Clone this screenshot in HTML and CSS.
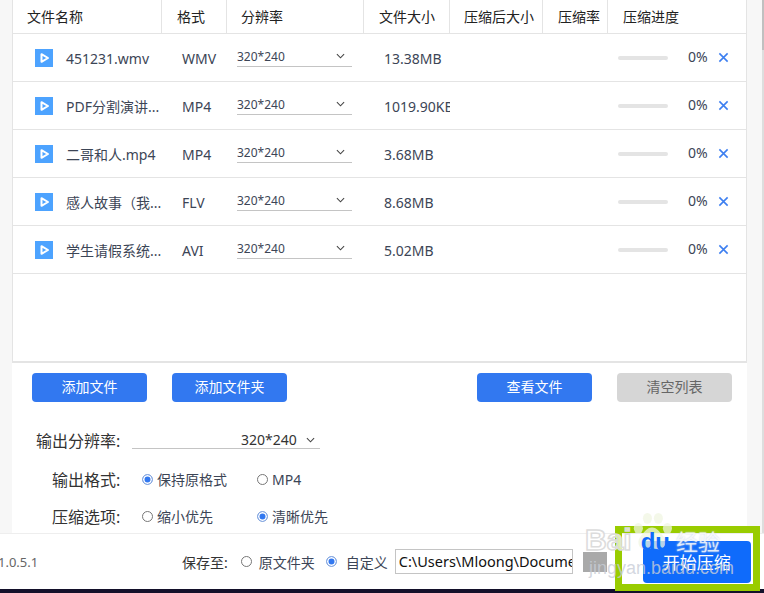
FILE: index.html
```html
<!DOCTYPE html>
<html lang="zh-CN">
<head>
  <meta charset="UTF-8">
  <meta name="viewport" content="width=device-width, initial-scale=1.0">
  <title>视频压缩</title>
  <link rel="stylesheet" href="styles.css">
</head>
<body>
  <div class="app">
    <div class="main">
      <div class="list">
        <div class="row head">
          <div class="c name">文件名称</div>
          <div class="c fmt">格式</div>
          <div class="c res">分辨率</div>
          <div class="c size">文件大小</div>
          <div class="c after">压缩后大小</div>
          <div class="c rate">压缩率</div>
          <div class="c prog">压缩进度</div>
        </div>

        <div class="row item">
          <div class="c name"><svg class="play" viewBox="0 0 18 18"><rect width="18" height="18" fill="#4da3ff"/><path d="M6.5 5.2v7.6L13 9z" fill="none" stroke="#fff" stroke-width="2" stroke-linejoin="round"/></svg><span>451231.wmv</span></div>
          <div class="c fmt">WMV</div>
          <div class="c res"><div class="sel">320*240<svg class="arrow" viewBox="0 0 10 6"><path d="M1 1l4 4 4-4" fill="none" stroke="#444" stroke-width="1.2"/></svg></div></div>
          <div class="c size">13.38MB</div>
          <div class="c after"></div>
          <div class="c rate"></div>
          <div class="c prog"><div class="bar"></div><span class="pct">0%</span><svg class="del" viewBox="0 0 12 12"><path d="M1.5 1.5l9 9M10.5 1.5l-9 9" stroke="#3d7ff0" stroke-width="1.7"/></svg></div>
        </div>

        <div class="row item">
          <div class="c name"><svg class="play" viewBox="0 0 18 18"><rect width="18" height="18" fill="#4da3ff"/><path d="M6.5 5.2v7.6L13 9z" fill="none" stroke="#fff" stroke-width="2" stroke-linejoin="round"/></svg><span>PDF分割演讲...</span></div>
          <div class="c fmt">MP4</div>
          <div class="c res"><div class="sel">320*240<svg class="arrow" viewBox="0 0 10 6"><path d="M1 1l4 4 4-4" fill="none" stroke="#444" stroke-width="1.2"/></svg></div></div>
          <div class="c size">1019.90KB</div>
          <div class="c after"></div>
          <div class="c rate"></div>
          <div class="c prog"><div class="bar"></div><span class="pct">0%</span><svg class="del" viewBox="0 0 12 12"><path d="M1.5 1.5l9 9M10.5 1.5l-9 9" stroke="#3d7ff0" stroke-width="1.7"/></svg></div>
        </div>

        <div class="row item">
          <div class="c name"><svg class="play" viewBox="0 0 18 18"><rect width="18" height="18" fill="#4da3ff"/><path d="M6.5 5.2v7.6L13 9z" fill="none" stroke="#fff" stroke-width="2" stroke-linejoin="round"/></svg><span>二哥和人.mp4</span></div>
          <div class="c fmt">MP4</div>
          <div class="c res"><div class="sel">320*240<svg class="arrow" viewBox="0 0 10 6"><path d="M1 1l4 4 4-4" fill="none" stroke="#444" stroke-width="1.2"/></svg></div></div>
          <div class="c size">3.68MB</div>
          <div class="c after"></div>
          <div class="c rate"></div>
          <div class="c prog"><div class="bar"></div><span class="pct">0%</span><svg class="del" viewBox="0 0 12 12"><path d="M1.5 1.5l9 9M10.5 1.5l-9 9" stroke="#3d7ff0" stroke-width="1.7"/></svg></div>
        </div>

        <div class="row item">
          <div class="c name"><svg class="play" viewBox="0 0 18 18"><rect width="18" height="18" fill="#4da3ff"/><path d="M6.5 5.2v7.6L13 9z" fill="none" stroke="#fff" stroke-width="2" stroke-linejoin="round"/></svg><span>感人故事（我...</span></div>
          <div class="c fmt">FLV</div>
          <div class="c res"><div class="sel">320*240<svg class="arrow" viewBox="0 0 10 6"><path d="M1 1l4 4 4-4" fill="none" stroke="#444" stroke-width="1.2"/></svg></div></div>
          <div class="c size">8.68MB</div>
          <div class="c after"></div>
          <div class="c rate"></div>
          <div class="c prog"><div class="bar"></div><span class="pct">0%</span><svg class="del" viewBox="0 0 12 12"><path d="M1.5 1.5l9 9M10.5 1.5l-9 9" stroke="#3d7ff0" stroke-width="1.7"/></svg></div>
        </div>

        <div class="row item">
          <div class="c name"><svg class="play" viewBox="0 0 18 18"><rect width="18" height="18" fill="#4da3ff"/><path d="M6.5 5.2v7.6L13 9z" fill="none" stroke="#fff" stroke-width="2" stroke-linejoin="round"/></svg><span>学生请假系统...</span></div>
          <div class="c fmt">AVI</div>
          <div class="c res"><div class="sel">320*240<svg class="arrow" viewBox="0 0 10 6"><path d="M1 1l4 4 4-4" fill="none" stroke="#444" stroke-width="1.2"/></svg></div></div>
          <div class="c size">5.02MB</div>
          <div class="c after"></div>
          <div class="c rate"></div>
          <div class="c prog"><div class="bar"></div><span class="pct">0%</span><svg class="del" viewBox="0 0 12 12"><path d="M1.5 1.5l9 9M10.5 1.5l-9 9" stroke="#3d7ff0" stroke-width="1.7"/></svg></div>
        </div>
      </div>

      <div class="panel">
        <div class="buttons">
          <button class="btn">添加文件</button>
          <button class="btn second">添加文件夹</button>
          <button class="btn push">查看文件</button>
          <button class="btn gray">清空列表</button>
        </div>
        <div class="opt res-opt">
          <label class="lbl">输出分辨率:</label>
          <div class="out-sel">320*240<svg class="arrow" viewBox="0 0 10 6"><path d="M1 1l4 4 4-4" fill="none" stroke="#444" stroke-width="1.2"/></svg></div>
        </div>
        <div class="opt fmt-opt">
          <label class="lbl">输出格式:</label>
          <div class="radio-wrap"><span class="radio on"></span>保持原格式</div>
          <div class="radio-wrap"><span class="radio"></span>MP4</div>
        </div>
        <div class="opt zip-opt">
          <label class="lbl">压缩选项:</label>
          <div class="radio-wrap"><span class="radio"></span>缩小优先</div>
          <div class="radio-wrap"><span class="radio on"></span>清晰优先</div>
        </div>
      </div>
    </div>

    <div class="foot">
      <span class="ver">1.0.5.1</span>
      <span class="save">保存至:</span>
      <div class="radio-wrap"><span class="radio"></span>原文件夹</div>
      <div class="radio-wrap"><span class="radio on"></span>自定义</div>
      <div class="path">C:\Users\Mloong\Documents</div>
      <div class="folder"></div>
      <button class="start">开始压缩</button>
    </div>
    <div class="strip"></div>

    <div class="edge"></div>
    <div class="frame"></div>
    <!-- baidu watermark sits over the bottom right corner -->
    <div class="mark">
      <svg class="paw" viewBox="0 0 44 44">
        <ellipse cx="7" cy="18" rx="5" ry="6"/>
        <ellipse cx="17" cy="7" rx="5" ry="6"/>
        <ellipse cx="29" cy="7" rx="5" ry="6"/>
        <ellipse cx="39" cy="18" rx="5" ry="6"/>
        <path d="M22 17c6 0 8 5 12 9 5 5 4 15-5 15-3 0-5-1-7-1s-4 1-7 1c-9 0-10-10-5-15 4-4 6-9 12-9z"/>
      </svg>
      <div class="mark-top"><span class="mark-bai">Bai</span><span class="mark-du">du</span><span class="mark-cn">经验</span></div>
      <div class="mark-url">jingyan.baidu.com</div>
    </div>
  </div>
</body>
</html>
```

FILE: styles.css
```css
body {
  margin: 0;
  font-family: "Noto Sans", "Noto Sans CJK SC", sans-serif;
  font-size: 14px;
  color: #333;
  background: #fff;
  overflow: hidden;
}
.app {
  position: relative;
  width: 764px;
  height: 593px;
  display: flex;
  flex-direction: column;
  overflow: hidden;
}
.main {
  height: 534px;
  padding: 0 17px 0 12px;
  background: linear-gradient(#f7f7f7, #f7f7f7) left / 12px 100% no-repeat, linear-gradient(#f7f7f7, #f7f7f7) right / 17px 100% no-repeat, #fff;
  box-sizing: border-box;
  border-bottom: 1px solid #eee;
}
.list {
  height: 363px;
  box-sizing: border-box;
  background: #fff;
  border-left: 1px solid #e4e4e4;
  border-right: 1px solid #e4e4e4;
  border-bottom: 2px solid #e4e4e4;
}
.row {
  display: grid;
  grid-template-columns: 149px 65px 137px 86px 93px 65px 1fr;
  border-bottom: 1px solid #e4e4e4;
  box-sizing: border-box;
}
.head {
  height: 34px;
  color: #222;
  line-height: 33px;
}
.head .c {
  border-right: 1px solid #e4e4e4;
  box-sizing: border-box;
  white-space: nowrap;
}
.head .prog {
  border-right: 0;
  padding-left: 15px;
}
.head .name { padding-left: 14px; }
.head .fmt { padding-left: 15px; }
.head .res { padding-left: 14px; }
.head .size { padding-left: 15px; }
.head .after { padding-left: 14px; }
.head .rate { padding-left: 15px; }
.item {
  height: 48px;
  grid-template-rows: 47px;
  line-height: 20px;
  color: #3c4556;
}
.item .c {
  display: flex;
  align-items: center;
  min-width: 0;
  white-space: nowrap;
}
.item .name { padding-left: 22px; }
.item .name span {
  margin-left: 13px;
  padding-top: 2px;
}
.item .fmt {
  padding: 2px 0 0 20px;
}
.item .res { padding-left: 10px; }
.item .size {
  padding: 2px 0 0 20px;
  overflow: hidden;
}
.play {
  width: 18px;
  height: 18px;
  flex: none;
}
.sel {
  width: 115px;
  height: 19px;
  line-height: 18px;
  font-size: 12px;
  border-bottom: 1px solid #c4c4c4;
  display: flex;
  justify-content: space-between;
  box-sizing: border-box;
}
.arrow {
  width: 9px;
  height: 6px;
  margin: 5px 7px 0 0;
}
.item .prog { padding-left: 10px; }
.bar {
  width: 50px;
  height: 4px;
  background: #e4e4e4;
  border-radius: 2px;
}
.pct {
  margin-left: 20px;
  position: relative;
  top: -1px;
}
.del {
  width: 11px;
  height: 11px;
  margin-left: 10px;
}
.panel { height: 170px; }
.buttons {
  display: flex;
  padding: 10px 15px 0 20px;
  gap: 25px;
}
.btn {
  width: 115px;
  height: 29px;
  border: 0;
  border-radius: 4px;
  background: #3278f0;
  color: #fff;
  font: inherit;
  padding: 0 0 3px;
}
.push { margin-left: auto; }
.second { margin-right: 165px; }
.gray {
  background: #d6d6d6;
  color: #666;
}
.opt {
  display: flex;
  align-items: center;
  color: #333;
}
.lbl {
  white-space: nowrap;
  font-size: 16px;
}
.res-opt {
  margin-top: 28px;
  padding-left: 24px;
  height: 19px;
}
.res-opt .lbl { width: 85px; }
.out-sel {
  width: 188px;
  height: 19px;
  margin-left: 11px;
  padding-left: 109px;
  box-sizing: border-box;
  border-bottom: 1px solid #c4c4c4;
  display: flex;
  line-height: 20px;
  gap: 9px;
}
.out-sel .arrow { margin: 7px 0 0; }
.fmt-opt {
  margin-top: 18px;
  padding-left: 40px;
  height: 24px;
}
.zip-opt {
  margin-top: 13px;
  padding-left: 40px;
  height: 24px;
}
.fmt-opt .lbl, .zip-opt .lbl { width: 90px; }
.opt .radio-wrap { width: 115px; }
.radio-wrap {
  display: flex;
  align-items: center;
  white-space: nowrap;
  color: #3c4556;
}
.radio {
  width: 9px;
  height: 9px;
  border: 1px solid #777;
  border-radius: 50%;
  margin-right: 4px;
  background: #fff;
  flex: none;
}
.radio.on {
  border-color: #8aa9dd;
  background: #3278f0;
  box-shadow: inset 0 0 0 1.5px #fff;
}
.foot {
  height: 55px;
  display: flex;
  align-items: center;
  background: #fff;
}
.ver {
  width: 184px;
  margin-left: -2px;
  color: #666;
  flex: none;
  font-size: 13px;
}
.save { margin-right: 13px; }
.foot .radio-wrap { margin-right: 11px; }
.foot .radio-wrap .radio { margin-right: 7px; }
.foot .radio-wrap .radio.on { margin-right: 9px; }
.path {
  width: 178px;
  height: 25px;
  margin-left: -4px;
  border: 1px solid #c4c4c4;
  box-sizing: border-box;
  padding-left: 3px;
  line-height: 23px;
  font-size: 14.5px;
  color: #111;
  overflow: hidden;
  white-space: nowrap;
  flex: none;
}
.folder {
  width: 24px;
  height: 20px;
  margin-left: 10px;
  background: #a9a9a9;
  flex: none;
}
.start {
  width: 108px;
  height: 42px;
  margin-left: 36px;
  border: 0;
  border-radius: 4px;
  background: #0f6bfb;
  color: #fff;
  font: inherit;
  font-size: 17px;
  padding: 0;
  flex: none;
}
.strip {
  height: 4px;
  background: #13102a;
}
.edge {
  position: absolute;
  left: 762px;
  top: 0;
  width: 2px;
  height: 533px;
  background: linear-gradient(#c0c0c0 50px, #dedede 50px);
}
.frame {
  position: absolute;
  left: 615px;
  top: 526px;
  width: 145px;
  height: 65px;
  box-sizing: border-box;
  border: 7px solid #99cc00;
}
.mark {
  position: absolute;
  left: 585px;
  top: 512px;
  width: 140px;
  height: 66px;
  color: rgba(255, 255, 255, 0.75);
}
.paw {
  position: absolute;
  left: 47px;
  top: 0;
  width: 40px;
  height: 40px;
  fill: rgba(240, 245, 225, 0.75);
}
.mark-top {
  position: absolute;
  top: 11px;
  left: 0;
  display: flex;
  align-items: baseline;
  white-space: nowrap;
}
.mark-bai {
  font: bold 30px/34px "Liberation Sans", sans-serif;
  color: rgba(255, 255, 255, 0.7);
  -webkit-text-stroke: 1.5px #dcdcdc;
}
.mark-du {
  font: bold 24px/34px "Liberation Sans", sans-serif;
  margin-left: 9px;
  color: #0f6bfb;
}
.mark-cn {
  font-family: "Noto Sans CJK SC", sans-serif;
  font-size: 22px;
  line-height: 34px;
  margin-left: 6px;
  text-shadow: 0 0 2px #c8d2e4;
}
.mark-url {
  position: absolute;
  top: 46px;
  left: 4px;
  font: 18px/20px "Liberation Sans", sans-serif;
  color: rgba(200, 205, 215, 0.8);
  white-space: nowrap;
}
```
